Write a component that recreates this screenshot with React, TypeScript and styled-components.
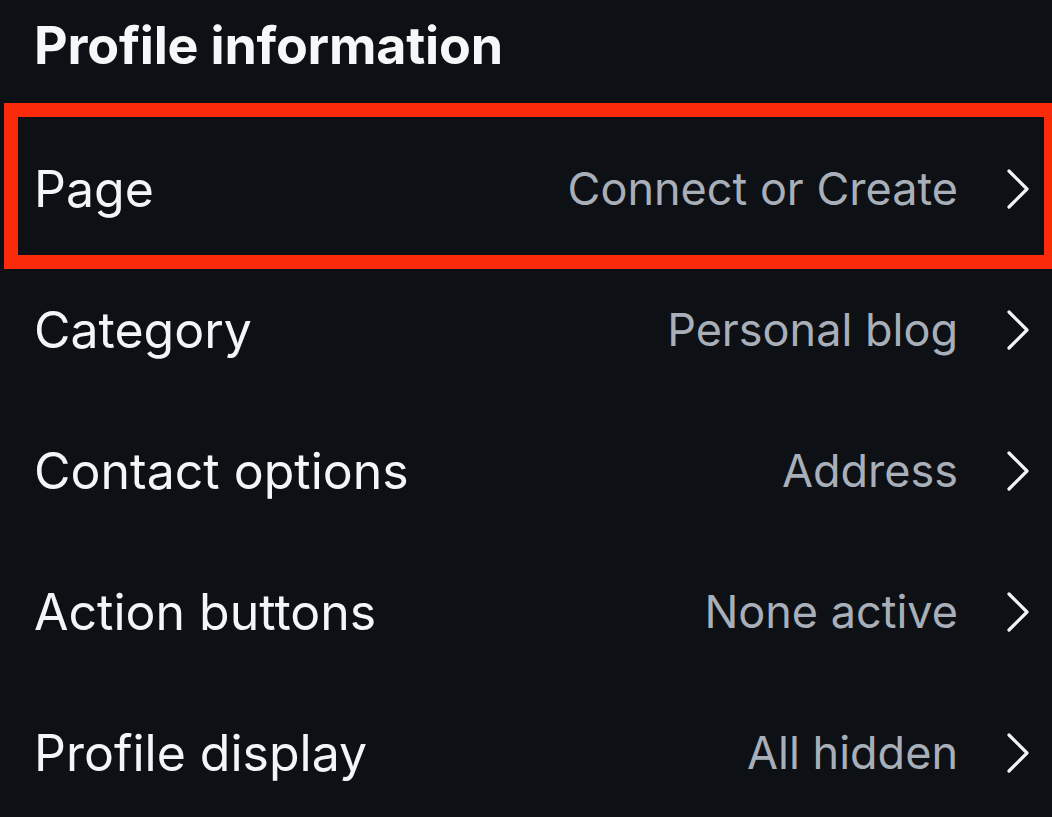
import styled, { createGlobalStyle } from "styled-components";

interface SettingRowProps {
  label: string;
  value: string;
  highlighted?: boolean;
}

const rows: SettingRowProps[] = [
  { label: "Page", value: "Connect or Create", highlighted: true },
  { label: "Category", value: "Personal blog" },
  { label: "Contact options", value: "Address" },
  { label: "Action buttons", value: "None active" },
  { label: "Profile display", value: "All hidden" },
];

const Chevron = () => (
  <svg width="24" height="42" viewBox="0 0 24 42" fill="none">
    <path
      d="M3 3 L21 21 L3 39"
      stroke="#f2f3f5"
      strokeWidth="3.2"
      strokeLinecap="round"
      strokeLinejoin="round"
    />
  </svg>
);

const SettingRow = (props: SettingRowProps) => {
  const { label, value, highlighted } = props;

  return (
    <Row $highlighted={highlighted}>
      <Label>{label}</Label>
      <Value>{value}</Value>
      <ChevronBox>
        <Chevron />
      </ChevronBox>
    </Row>
  );
};

const App = () => {
  return (
    <>
      <GlobalStyle />
      <Screen>
        <Title>Profile information</Title>
        <List>
          {rows.map((row) => (
            <SettingRow key={row.label} {...row} />
          ))}
        </List>
      </Screen>
    </>
  );
};

export default App;

const GlobalStyle = createGlobalStyle`
  html, body {
    margin: 0;
    padding: 0;
    background: #0d1015;
  }

  body {
    font-family: Inter, "Noto Sans", "Liberation Sans", sans-serif;
    overflow: hidden;
  }
`;

const Screen = styled.div`
  width: 1052px;
  height: 817px;
  background: #0d1015;
  color: #f4f5f7;
  overflow: hidden;
`;

const Title = styled.h1`
  margin: 0;
  height: 118px;
  padding: 16px 0 0 34px;
  box-sizing: border-box;
  font-size: 52px;
  font-weight: 700;
  line-height: 60px;
  letter-spacing: -0.2px;
  color: #f6f7f9;
`;

const List = styled.div`
  display: flex;
  flex-direction: column;
`;

const Row = styled.div<{ $highlighted?: boolean }>`
  position: relative;
  display: flex;
  align-items: center;
  height: 141px;
  padding: 0 22px 0 34px;
  box-sizing: border-box;

  ${({ $highlighted }) =>
    $highlighted &&
    `
    &::after {
      content: "";
      position: absolute;
      top: -15px;
      bottom: -10px;
      left: 4px;
      right: -6px;
      border: 14px solid #fb2a0a;
      pointer-events: none;
    }
  `}
`;

const Label = styled.span`
  flex: 1;
  font-size: 50px;
  font-weight: 400;
  color: #f4f5f7;
`;

const Value = styled.span`
  font-size: 45px;
  font-weight: 400;
  color: #a9afb8;
`;

const ChevronBox = styled.div`
  display: flex;
  align-items: center;
  margin-left: 48px;
`;
